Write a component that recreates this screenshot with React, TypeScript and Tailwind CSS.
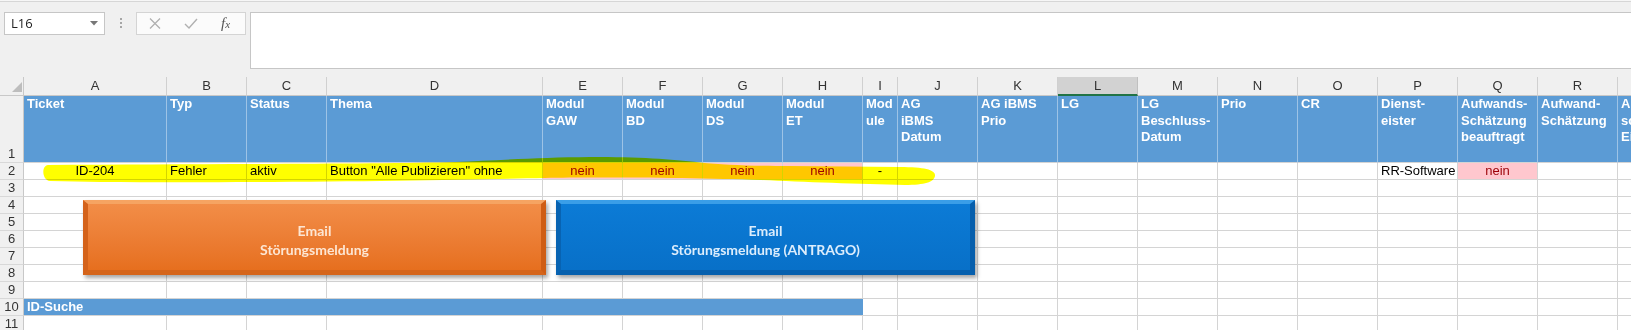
import React from 'react';

const letters = ['A','B','C','D','E','F','G','H','I','J','K','L','M','N','O','P','Q','R','S'];

const heads: string[][] = [
  ['Ticket'], ['Typ'], ['Status'], ['Thema'],
  ['Modul', 'GAW'], ['Modul', 'BD'], ['Modul', 'DS'], ['Modul', 'ET'],
  ['Mod', 'ule'], ['AG', 'iBMS', 'Datum'], ['AG iBMS', 'Prio'], ['LG'],
  ['LG', 'Beschluss-', 'Datum'], ['Prio'], ['CR'], ['Dienst-', 'eister'],
  ['Aufwands-', 'Schätzung', 'beauftragt'], ['Aufwand-', 'Schätzung'], ['Aufwand', 'schätzung', 'Einheit'],
];

type C2 = { t?: string; c?: boolean; pink?: boolean };
const row2: C2[] = [
  { t: 'ID-204', c: true }, { t: 'Fehler' }, { t: 'aktiv' }, { t: 'Button "Alle Publizieren" ohne' },
  { t: 'nein', c: true, pink: true }, { t: 'nein', c: true, pink: true },
  { t: 'nein', c: true, pink: true }, { t: 'nein', c: true, pink: true },
  { t: '-', c: true }, {}, {}, {}, {}, {}, {},
  { t: 'RR-Software' }, { t: 'nein', c: true, pink: true }, {}, {},
];

function RowNum({ n }: { n: number }) {
  return (
    <div className="flex items-end justify-center border-r border-b border-r-[#c8c8c8] border-b-[#d8d8d8] bg-[#f0f0f0] text-[13px] leading-[16px] text-[#333]">
      {n}
    </div>
  );
}

function Empty() {
  return <div className="border-r border-b border-[#d4d4d4] bg-white" />;
}

function TopBar() {
  return (
    <div className="h-[77px] flex flex-col">
      <div className="h-[1px] bg-[#f6f6f6]" />
      <div className="h-[1px] bg-[#d6d6d6]" />
      <div className="flex items-start pt-[10px] pl-[4px]">
        <div className="w-[101px] h-[23px] border border-[#c6c6c6] bg-white flex items-center justify-between pl-[6px] pr-[6px]">
          <span className="font-['Open_Sans',sans-serif] text-[13px] text-[#222]">L16</span>
          <svg width="8" height="5" viewBox="0 0 8 5">
            <path d="M0 0 L8 0 L4 4.5 Z" fill="#777" />
          </svg>
        </div>
        <div className="ml-[15px] mt-[6px] flex flex-col gap-[2px]">
          <div className="w-[2px] h-[2px] bg-[#a6a6a6]" />
          <div className="w-[2px] h-[2px] bg-[#a6a6a6]" />
          <div className="w-[2px] h-[2px] bg-[#a6a6a6]" />
        </div>
        <div className="ml-[14px] w-[110px] h-[23px] border border-[#d4d4d4] bg-[#fbfbfb] flex items-center">
          <svg className="ml-[12px]" width="12" height="11" viewBox="0 0 12 11">
            <path d="M1 0.5 L11 10.5 M11 0.5 L1 10.5" stroke="#b0b0b0" strokeWidth="1.3" />
          </svg>
          <svg className="ml-[23px]" width="14" height="11" viewBox="0 0 14 11">
            <path d="M1 6 L5 10 L13 1" stroke="#b0b0b0" strokeWidth="1.4" fill="none" />
          </svg>
          <span className="ml-[23px] font-['Liberation_Serif',serif] italic text-[15px] leading-none text-[#555]">
            f<span className="text-[11px]">x</span>
          </span>
        </div>
        <div className="ml-[4px] flex-1 h-[57px] border border-r-0 border-[#c6c6c6] bg-white" />
      </div>
    </div>
  );
}

function Sheet() {
  const cells: React.ReactNode[] = [];
  cells.push(
    <div key="corner" className="relative border-r border-b border-r-[#c8c8c8] border-b-[#c8c8c8] bg-[#f0f0f0]">
      <svg className="absolute left-[12px] top-[5px]" width="10" height="10" viewBox="0 0 10 10">
        <path d="M10 0 L10 10 L0 10 Z" fill="#bdbdbd" />
      </svg>
    </div>
  );
  letters.forEach((l) => {
    const sel = l === 'L';
    cells.push(
      <div
        key={'h' + l}
        className={
          sel
            ? 'flex items-center justify-center bg-[#d2d2d2] border-r border-r-[#c0c0c0] border-b-2 border-b-[#217346] text-[13px] text-[#333]'
            : 'flex items-center justify-center bg-[#f0f0f0] border-r border-b border-r-[#d0d0d0] border-b-[#c8c8c8] text-[13px] text-[#333]'
        }
      >
        {l}
      </div>
    );
  });

  cells.push(<RowNum key="r1" n={1} />);
  heads.forEach((h, i) => {
    cells.push(
      <div
        key={'b' + i}
        className="bg-[#5b9bd5] text-white font-bold text-[13px] leading-[16.5px] pl-[3px] border-r border-b border-r-[#9dc3e6] border-b-[#d4d4d4] overflow-hidden whitespace-nowrap"
      >
        {h.map((line, j) => (
          <div key={j}>{line}</div>
        ))}
      </div>
    );
  });

  cells.push(<RowNum key="r2" n={2} />);
  row2.forEach((c, i) => {
    cells.push(
      <div
        key={'c' + i}
        className={
          (c.pink ? 'bg-[#ffc7ce] text-[#9c0006] ' : 'bg-white text-black ') +
          (c.c ? 'justify-center ' : 'justify-start pl-[3px] ') +
          'flex items-end pb-[1px] text-[13px] leading-[15px] border-r border-b border-[#d4d4d4] whitespace-nowrap overflow-visible'
        }
      >
        {c.t}
      </div>
    );
  });

  for (let r = 3; r <= 11; r++) {
    cells.push(<RowNum key={'rn' + r} n={r} />);
    if (r === 10) {
      cells.push(
        <div
          key="idsuche"
          className="col-span-8 bg-[#5b9bd5] text-white font-bold text-[13px] leading-[15px] pl-[3px] flex items-end pb-[1px] border-b border-b-[#d4d4d4]"
        >
          ID-Suche
        </div>
      );
      for (let k = 8; k < 19; k++) cells.push(<Empty key={'e' + r + '-' + k} />);
    } else {
      for (let k = 0; k < 19; k++) cells.push(<Empty key={'e' + r + '-' + k} />);
    }
  }

  return (
    <div className="grid w-max grid-cols-[24px_143px_80px_80px_216px_80px_80px_80px_80px_35px_80px_80px_80px_80px_80px_80px_80px_80px_80px_80px] grid-rows-[19px_67px_repeat(10,17px)]">
      {cells}
    </div>
  );
}

function Overlays() {
  return (
    <>
      <svg
        className="absolute left-0 top-0 pointer-events-none mix-blend-multiply"
        width="1631"
        height="330"
        viewBox="0 0 1631 330"
      >
        <path
          d="M 48 165 C 200 164, 380 164, 455 162 C 500 160, 540 157.5, 590 157 C 640 157, 670 159, 700 162.5 C 725 165, 750 166, 790 166 L 900 167 C 925 167, 936 170, 935 176 C 934 182, 925 185, 905 185 C 860 184, 800 182, 760 180 C 700 178, 600 177, 545 178 C 450 180, 300 183, 100 182 L 50 181 C 42 180, 41 166, 48 165 Z"
          fill="#ffff00"
        />
      </svg>

      <div className="absolute left-[83px] top-[200px] w-[463px] h-[75px] border-[5px] border-t-[4px] border-t-[#f6a462] border-l-[#d4621a] border-r-[#cf5d14] border-b-[#d5651b] bg-linear-to-b from-[#f28d47] to-[#e66f1e] shadow-[2px_3px_4px_rgba(0,0,0,0.35)] flex flex-col items-center justify-center pt-[5px] font-['Lato',sans-serif] font-bold text-[14px] leading-[19px] text-[#fde6d3]">
        <span>Email</span>
        <span>Störungsmeldung</span>
      </div>

      <div className="absolute left-[556px] top-[200px] w-[419px] h-[75px] border-[5px] border-t-[4px] border-t-[#3a9ee8] border-l-[#0863b2] border-r-[#065eac] border-b-[#0660ae] bg-linear-to-b from-[#0c7bd6] to-[#0870c8] shadow-[2px_3px_4px_rgba(0,0,0,0.35)] flex flex-col items-center justify-center pt-[5px] font-['Lato',sans-serif] font-bold text-[14px] leading-[19px] text-[#dcedfc]">
        <span>Email</span>
        <span>Störungsmeldung (ANTRAGO)</span>
      </div>
    </>
  );
}

export default function App() {
  return (
    <div className="relative w-[1631px] h-[330px] overflow-hidden bg-[#f0f0f0] font-['Liberation_Sans',Arial,sans-serif]">
      <TopBar />
      <Sheet />
      <Overlays />
    </div>
  );
}
